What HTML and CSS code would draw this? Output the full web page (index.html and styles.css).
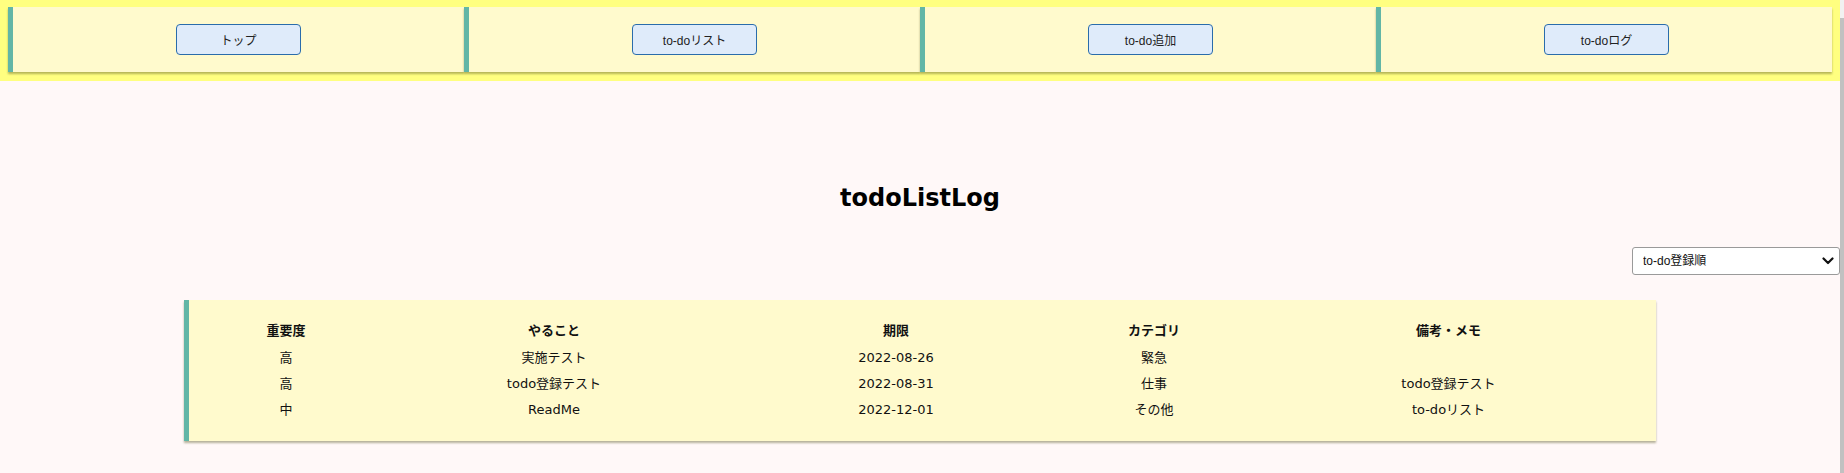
FILE: index.html
```html
<!DOCTYPE html>
<html lang="ja">
<head>
<meta charset="utf-8">
<title>todoListLog</title>
<link rel="stylesheet" href="styles.css">
</head>
<body>
<header class="nav">
  <div class="nav-card"><button class="nav-btn">トップ</button></div>
  <div class="nav-card"><button class="nav-btn">to-doリスト</button></div>
  <div class="nav-card"><button class="nav-btn">to-do追加</button></div>
  <div class="nav-card"><button class="nav-btn">to-doログ</button></div>
</header>
<main class="main">
  <h1 class="title">todoListLog</h1>
  <div class="sort-row">
    <div class="sort-box">
      <select class="sort-select">
        <option>to-do登録順</option>
        <option>期限順</option>
        <option>重要度順</option>
      </select>
      <svg class="sort-chevron" width="12" height="8" viewBox="0 0 12 8"><path d="M1.5 1.5 L6 6 L10.5 1.5" fill="none" stroke="#111" stroke-width="2.2" stroke-linecap="round" stroke-linejoin="round"/></svg>
    </div>
  </div>
  <section class="log-card">
    <table class="log-table">
      <colgroup>
        <col class="c1"><col class="c2"><col class="c3"><col class="c4"><col class="c5">
      </colgroup>
      <thead>
        <tr><th>重要度</th><th>やること</th><th>期限</th><th>カテゴリ</th><th>備考・メモ</th></tr>
      </thead>
      <tbody>
        <tr><td>高</td><td>実施テスト</td><td>2022-08-26</td><td>緊急</td><td></td></tr>
        <tr><td>高</td><td>todo登録テスト</td><td>2022-08-31</td><td>仕事</td><td>todo登録テスト</td></tr>
        <tr><td>中</td><td>ReadMe</td><td>2022-12-01</td><td>その他</td><td>to-doリスト</td></tr>
      </tbody>
    </table>
  </section>
</main>
<div class="scrollbar"></div>
</body>
</html>
```
FILE: styles.css
```css
html, body {
  margin: 0;
  padding: 0;
}
body {
  background: #fff8f8;
  margin-right: 4px;
  font-family: "DejaVu Sans", "Noto Sans CJK JP", sans-serif;
  color: #111;
  overflow: hidden;
  height: 473px;
}
.nav {
  background: #ffff80;
  padding: 7px 8px 9px 8px;
  display: grid;
  grid-template-columns: repeat(4, 1fr);
}
.nav-card {
  height: 65px;
  box-sizing: border-box;
  background: #fffacd;
  border-left: 5px solid #62b6a6;
  box-shadow: 0 2px 2px rgba(90, 90, 40, 0.45);
  display: flex;
  align-items: center;
  justify-content: center;
}
.nav-btn {
  width: 125px;
  height: 31px;
  margin-top: -1px;
  background: #dfebfa;
  border: 1px solid #2a6cab;
  border-radius: 4px;
  font-family: "Liberation Sans", "Noto Sans CJK JP", sans-serif;
  font-size: 12px;
  color: #222;
  padding: 0;
}
.main {
  display: flex;
  flex-direction: column;
}
.title {
  margin: 103px 0 0 0;
  font-size: 24px;
  line-height: 28px;
  font-weight: bold;
  text-align: center;
  color: #000;
}
.sort-row {
  margin-top: 35px;
  display: flex;
  justify-content: flex-end;
}
.sort-box {
  position: relative;
  width: 208px;
  height: 28px;
}
.sort-select {
  appearance: none;
  -webkit-appearance: none;
  width: 208px;
  height: 28px;
  box-sizing: border-box;
  border: 1px solid #9a9a9a;
  border-radius: 3px;
  background: #fff;
  padding: 0 0 0 10px;
  font-family: "Liberation Sans", "Noto Sans CJK JP", sans-serif;
  font-size: 12px;
  color: #111;
}
.sort-chevron {
  position: absolute;
  right: 6px;
  top: 10px;
  pointer-events: none;
}
.log-card {
  margin: 25px auto 0 auto;
  width: 80%;
  box-sizing: border-box;
  background: #fffacd;
  border-left: 5px solid #62b6a6;
  box-shadow: 0 2px 2px rgba(90, 90, 40, 0.45);
  padding: 18px 11px 19px 11px;
}
.log-table {
  width: 100%;
  border-collapse: collapse;
  table-layout: fixed;
  font-size: 13px;
}
.c1 { width: 172px; }
.c2 { width: 364px; }
.c3 { width: 320px; }
.c4 { width: 196px; }
.c5 { width: 393px; }
.log-table th,
.log-table td {
  height: 25px;
  line-height: 18px;
  padding: 1px 0 0 0;
  text-align: center;
  vertical-align: middle;
  color: #111;
}
.log-table th {
  font-weight: bold;
  height: 25px;
  padding: 0 0 1px 0;
}
.scrollbar {
  position: fixed;
  top: 0;
  right: 0;
  width: 4px;
  height: 100%;
  background: #f1f1f1;
}
.scrollbar::after {
  content: "";
  position: absolute;
  top: 18px;
  left: 0;
  width: 4px;
  bottom: 0;
  background: #c1c1c1;
}
```
